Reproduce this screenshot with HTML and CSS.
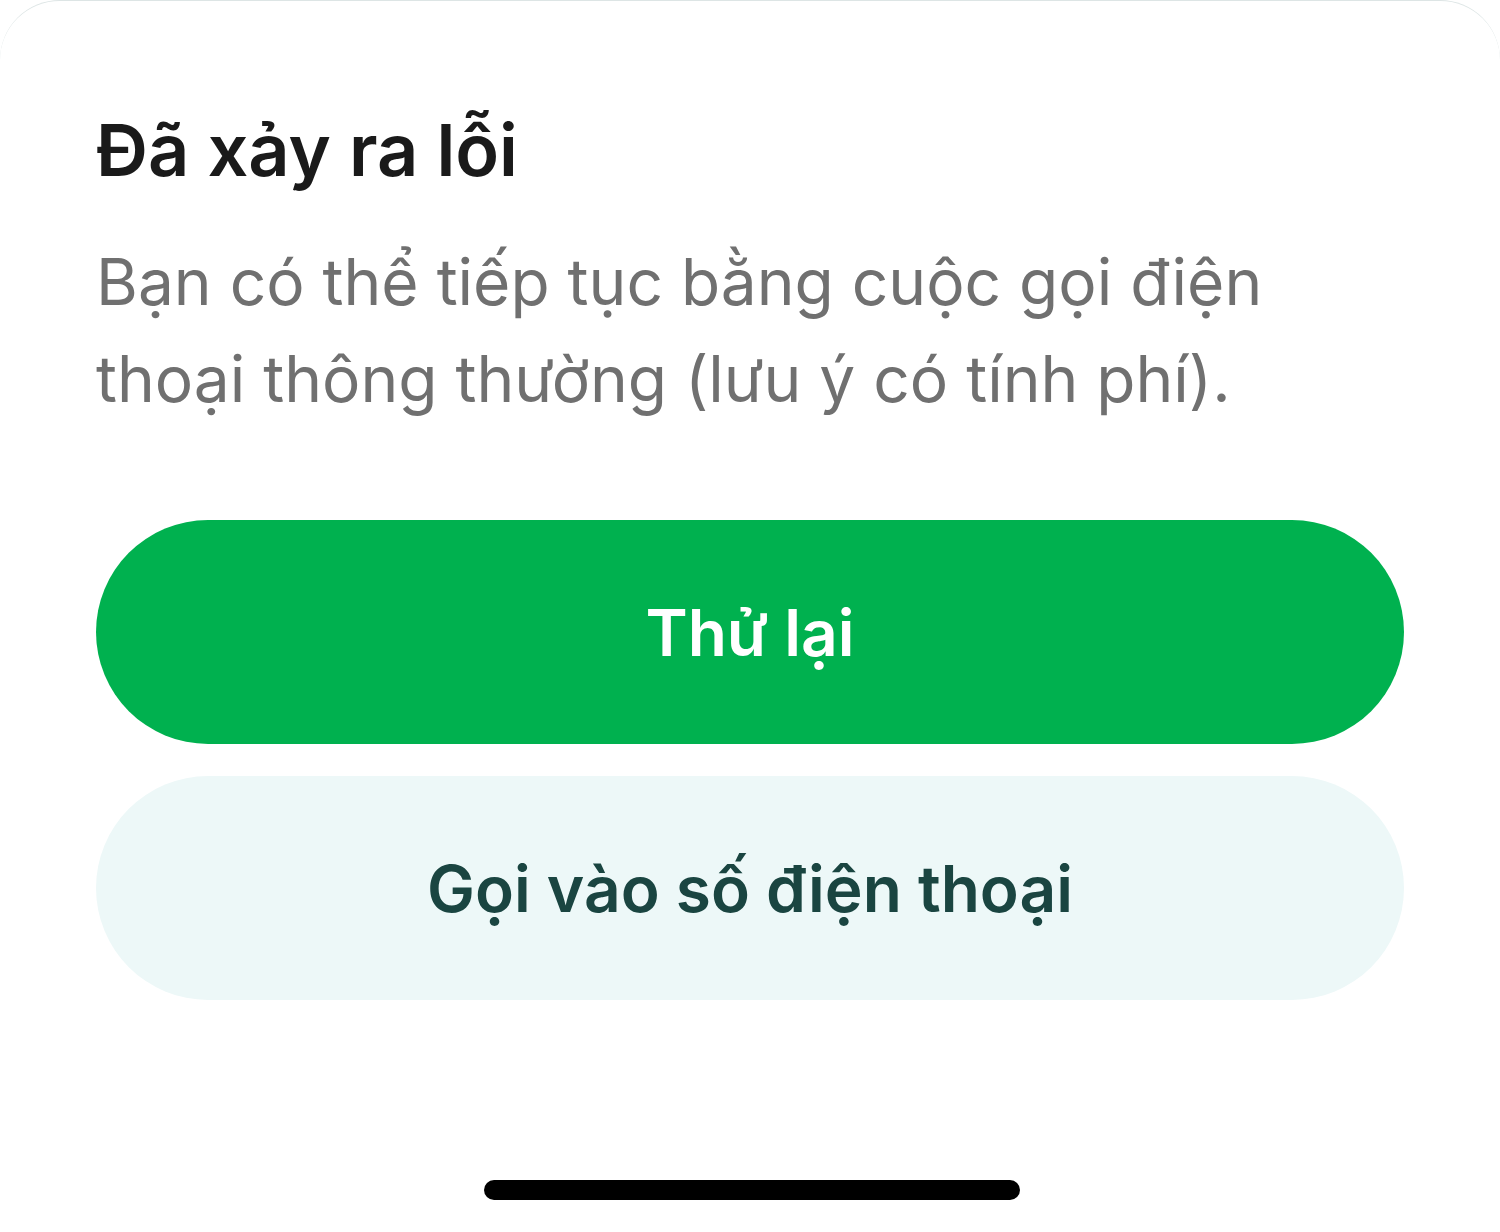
FILE: index.html
```
<!DOCTYPE html>
<html>
	<head>
		<meta charset="UTF-8">
		<title>Đã xảy ra lỗi</title>
		<link rel="stylesheet" href="styles.css">
	</head>
	<body>
		<div class="sheet">
			<h1 class="title">Đã xảy ra lỗi</h1>
			<p class="desc">Bạn có thể tiếp tục bằng cuộc gọi điện thoại thông thường (lưu ý có tính phí).</p>
			<div class="actions">
				<button class="btn btn-retry">Thử lại</button>
				<button class="btn btn-call">Gọi vào số điện thoại</button>
			</div>
			<div class="home-bar"></div>
		</div>
	</body>
</html>
```

FILE: styles.css
```
*{
	margin: 0;
	padding: 0;
	box-sizing: border-box;
}
body{
	background-color: #fff;
	font-family: Inter, "Noto Sans", sans-serif;
}
.sheet{
	width: 1500px;
	height: 1232px;
	padding: 106px 96px 0;
	border-top: 1px solid #dde5e5;
	border-radius: 60px 60px 0 0;
	display: flex;
	flex-direction: column;
}
.title{
	font-size: 72px;
	line-height: 86px;
	font-weight: 600;
	color: #1a1a1a;
}
.desc{
	margin-top: 40px;
	font-size: 64px;
	line-height: 97px;
	font-weight: 400;
	color: #707070;
	padding-right: 100px;
}
.actions{
	margin-top: 93px;
	display: flex;
	flex-direction: column;
	gap: 32px;
}
.btn{
	height: 224px;
	border: none;
	border-radius: 112px;
	font-family: Inter, "Noto Sans", sans-serif;
	font-size: 64px;
	font-weight: 600;
}
.btn-retry{
	background-color: #00b14f;
	color: #fff;
}
.btn-call{
	background-color: #edf8f8;
	color: #1a4541;
}
.home-bar{
	width: 536px;
	height: 20px;
	border-radius: 10px;
	background-color: #000;
	margin: auto auto 32px;
	transform: translateX(2px);
}
```
